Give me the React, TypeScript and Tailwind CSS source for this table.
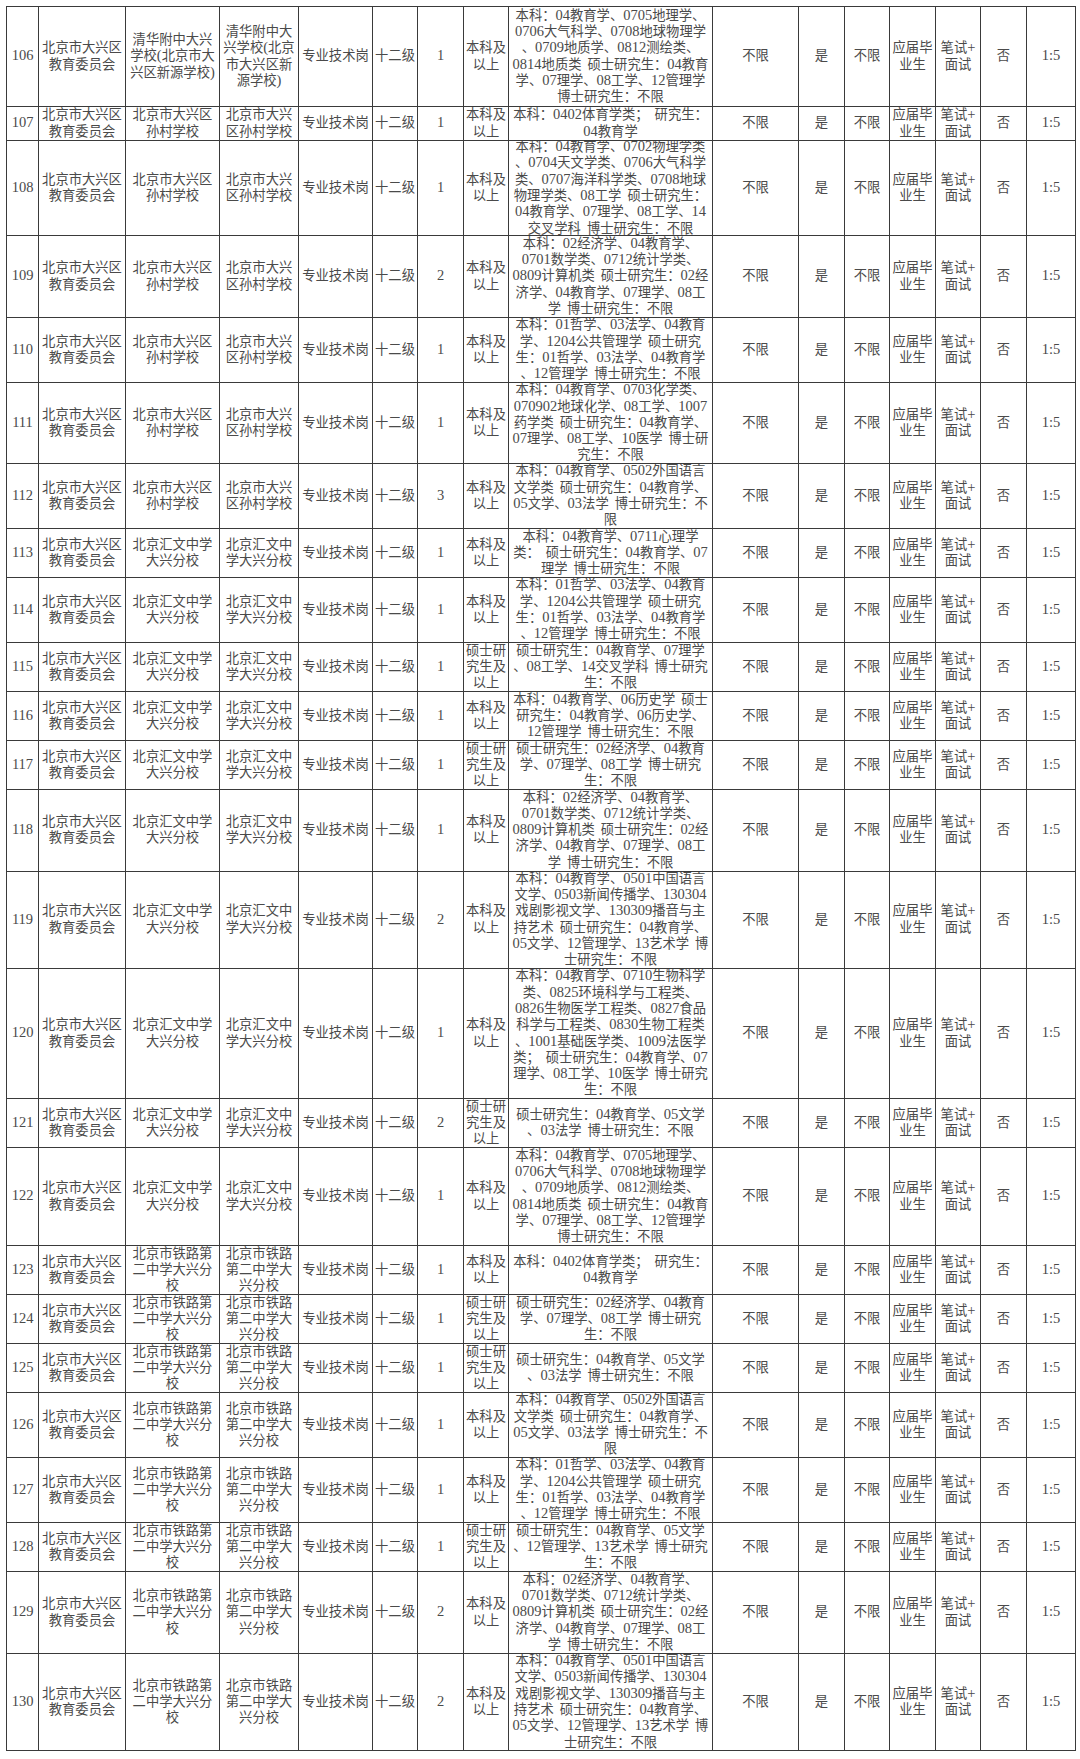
import React from "react";

type Row = {
  no: string;
  h: string;
  c3: string[];
  c4: string[];
  cnt: string;
  edu: string[];
  major: string[];
};

const ORG = ["北京市大兴区", "教育委员会"];
const SUN3 = ["北京市大兴区", "孙村学校"];
const SUN4 = ["北京市大兴", "区孙村学校"];
const HW3 = ["北京汇文中学", "大兴分校"];
const HW4 = ["北京汇文中", "学大兴分校"];
const TL3 = ["北京市铁路第", "二中学大兴分", "校"];
const TL4 = ["北京市铁路", "第二中学大", "兴分校"];
const BK = ["本科及", "以上"];
const SS = ["硕士研", "究生及", "以上"];

const M_GEO = [
  "本科：04教育学、0705地理学、",
  "0706大气科学、0708地球物理学",
  "、0709地质学、0812测绘类、",
  "0814地质类 硕士研究生：04教育",
  "学、07理学、08工学、12管理学",
  "博士研究生：不限",
];
const M_PE = ["本科：0402体育学类； 研究生：", "04教育学"];
const M_ECO = [
  "本科：02经济学、04教育学、",
  "0701数学类、0712统计学类、",
  "0809计算机类 硕士研究生：02经",
  "济学、04教育学、07理学、08工",
  "学 博士研究生：不限",
];
const M_PHIL = [
  "本科：01哲学、03法学、04教育",
  "学、1204公共管理学 硕士研究",
  "生：01哲学、03法学、04教育学",
  "、12管理学 博士研究生：不限",
];
const M_FL = [
  "本科：04教育学、0502外国语言",
  "文学类 硕士研究生：04教育学、",
  "05文学、03法学 博士研究生：不",
  "限",
];
const M_CN = [
  "本科：04教育学、0501中国语言",
  "文学、0503新闻传播学、130304",
  "戏剧影视文学、130309播音与主",
  "持艺术 硕士研究生：04教育学、",
  "05文学、12管理学、13艺术学 博",
  "士研究生：不限",
];
const M_S_ECO = ["硕士研究生：02经济学、04教育", "学、07理学、08工学 博士研究", "生：不限"];
const M_S_LIT = ["硕士研究生：04教育学、05文学", "、03法学 博士研究生：不限"];

const rows: Row[] = [
  { no: "106", h: "h-[100px]", c3: ["清华附中大兴", "学校(北京市大", "兴区新源学校)"], c4: ["清华附中大", "兴学校(北京", "市大兴区新", "源学校)"], cnt: "1", edu: BK, major: M_GEO },
  { no: "107", h: "h-[34px]", c3: SUN3, c4: SUN4, cnt: "1", edu: BK, major: M_PE },
  {
    no: "108", h: "h-[95px]", c3: SUN3, c4: SUN4, cnt: "1", edu: BK,
    major: [
      "本科：04教育学、0702物理学类",
      "、0704天文学类、0706大气科学",
      "类、0707海洋科学类、0708地球",
      "物理学类、08工学 硕士研究生：",
      "04教育学、07理学、08工学、14",
      "交叉学科 博士研究生：不限",
    ],
  },
  { no: "109", h: "h-[82px]", c3: SUN3, c4: SUN4, cnt: "2", edu: BK, major: M_ECO },
  { no: "110", h: "h-[65px]", c3: SUN3, c4: SUN4, cnt: "1", edu: BK, major: M_PHIL },
  {
    no: "111", h: "h-[81px]", c3: SUN3, c4: SUN4, cnt: "1", edu: BK,
    major: [
      "本科：04教育学、0703化学类、",
      "070902地球化学、08工学、1007",
      "药学类 硕士研究生：04教育学、",
      "07理学、08工学、10医学 博士研",
      "究生：不限",
    ],
  },
  { no: "112", h: "h-[65px]", c3: SUN3, c4: SUN4, cnt: "3", edu: BK, major: M_FL },
  {
    no: "113", h: "h-[49px]", c3: HW3, c4: HW4, cnt: "1", edu: BK,
    major: ["本科：04教育学、0711心理学", "类： 硕士研究生：04教育学、07", "理学 博士研究生：不限"],
  },
  { no: "114", h: "h-[65px]", c3: HW3, c4: HW4, cnt: "1", edu: BK, major: M_PHIL },
  {
    no: "115", h: "h-[49px]", c3: HW3, c4: HW4, cnt: "1", edu: SS,
    major: ["硕士研究生：04教育学、07理学", "、08工学、14交叉学科 博士研究", "生：不限"],
  },
  {
    no: "116", h: "h-[49px]", c3: HW3, c4: HW4, cnt: "1", edu: BK,
    major: ["本科：04教育学、06历史学 硕士", "研究生：04教育学、06历史学、", "12管理学 博士研究生：不限"],
  },
  { no: "117", h: "h-[49px]", c3: HW3, c4: HW4, cnt: "1", edu: SS, major: M_S_ECO },
  { no: "118", h: "h-[81.5px]", c3: HW3, c4: HW4, cnt: "1", edu: BK, major: M_ECO },
  { no: "119", h: "h-[97.5px]", c3: HW3, c4: HW4, cnt: "2", edu: BK, major: M_CN },
  {
    no: "120", h: "h-[130px]", c3: HW3, c4: HW4, cnt: "1", edu: BK,
    major: [
      "本科：04教育学、0710生物科学",
      "类、0825环境科学与工程类、",
      "0826生物医学工程类、0827食品",
      "科学与工程类、0830生物工程类",
      "、1001基础医学类、1009法医学",
      "类； 硕士研究生：04教育学、07",
      "理学、08工学、10医学 博士研究",
      "生：不限",
    ],
  },
  { no: "121", h: "h-[49px]", c3: HW3, c4: HW4, cnt: "2", edu: SS, major: M_S_LIT },
  { no: "122", h: "h-[98px]", c3: HW3, c4: HW4, cnt: "1", edu: BK, major: M_GEO },
  { no: "123", h: "h-[49px]", c3: TL3, c4: TL4, cnt: "1", edu: BK, major: M_PE },
  { no: "124", h: "h-[49px]", c3: TL3, c4: TL4, cnt: "1", edu: SS, major: M_S_ECO },
  { no: "125", h: "h-[49px]", c3: TL3, c4: TL4, cnt: "1", edu: SS, major: M_S_LIT },
  { no: "126", h: "h-[65px]", c3: TL3, c4: TL4, cnt: "1", edu: BK, major: M_FL },
  { no: "127", h: "h-[65px]", c3: TL3, c4: TL4, cnt: "1", edu: BK, major: M_PHIL },
  {
    no: "128", h: "h-[49px]", c3: TL3, c4: TL4, cnt: "1", edu: SS,
    major: ["硕士研究生：04教育学、05文学", "、12管理学、13艺术学 博士研究", "生：不限"],
  },
  { no: "129", h: "h-[82px]", c3: TL3, c4: TL4, cnt: "2", edu: BK, major: M_ECO },
  { no: "130", h: "h-[97px]", c3: TL3, c4: TL4, cnt: "2", edu: BK, major: M_CN },
];

function Line({ text }: { text: string }) {
  const parts = text.split(/([0-9A-Za-z:+()]+| )/).filter((p) => p !== "");
  return (
    <div className="h-[16.3px] shrink-0 whitespace-nowrap leading-[16.3px]">
      {parts.map((p, i) =>
        p === " " ? (
          <span key={i} className="inline-block w-[6px]" />
        ) : /^[0-9A-Za-z:+()]+$/.test(p) ? (
          <span key={i} className="text-[14.5px] leading-none">
            {p}
          </span>
        ) : (
          <span key={i} className="leading-none">
            {p}
          </span>
        )
      )}
    </div>
  );
}

function Cell({ w, lines, last }: { w: string; lines: string[]; last?: boolean }) {
  return (
    <div
      className={`${w} shrink-0 h-full flex flex-col items-center justify-center overflow-hidden text-center ${
        last ? "" : "border-r border-[#3a3a3a]"
      }`}
    >
      {lines.map((l, i) => (
        <Line key={i} text={l} />
      ))}
    </div>
  );
}

export default function App() {
  return (
    <div className="w-[1080px] h-[1759px] bg-white pt-[6px] pl-[6px] font-['Liberation_Serif','Noto_Sans_CJK_SC',serif] text-[13.3px] text-[#4a4a4a]">
      <div className="w-[1070px] border-l border-t border-r border-[#3a3a3a]">
        {rows.map((r) => (
          <div key={r.no} className={`flex ${r.h} border-b border-[#3a3a3a]`}>
            <Cell w="w-[32px]" lines={[r.no]} />
            <Cell w="w-[87px]" lines={ORG} />
            <Cell w="w-[94px]" lines={r.c3} />
            <Cell w="w-[79px]" lines={r.c4} />
            <Cell w="w-[74px]" lines={["专业技术岗"]} />
            <Cell w="w-[45px]" lines={["十二级"]} />
            <Cell w="w-[46px]" lines={[r.cnt]} />
            <Cell w="w-[45px]" lines={r.edu} />
            <Cell w="w-[204px]" lines={r.major} />
            <Cell w="w-[86px]" lines={["不限"]} />
            <Cell w="w-[46px]" lines={["是"]} />
            <Cell w="w-[45px]" lines={["不限"]} />
            <Cell w="w-[46px]" lines={["应届毕", "业生"]} />
            <Cell w="w-[45px]" lines={["笔试+", "面试"]} />
            <Cell w="w-[46px]" lines={["否"]} />
            <Cell w="w-[48px]" lines={["1:5"]} last />
          </div>
        ))}
      </div>
    </div>
  );
}
